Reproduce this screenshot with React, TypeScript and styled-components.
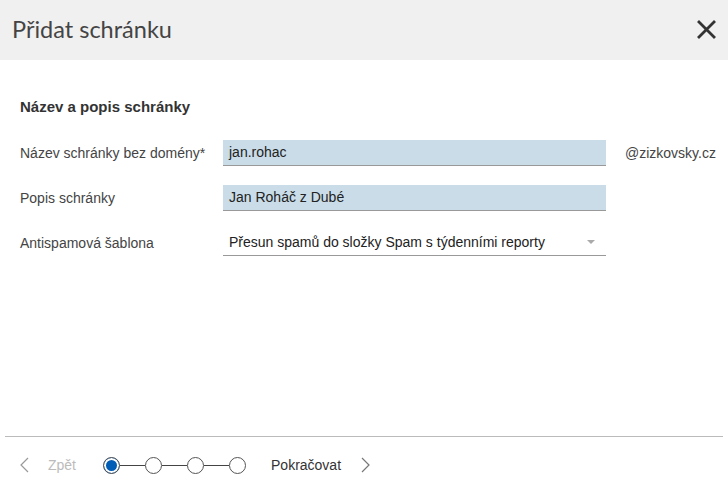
import React from "react";
import styled, { createGlobalStyle } from "styled-components";

const Global = createGlobalStyle`
  html, body { margin: 0; padding: 0; background: #fff; }
  body { font-family: "Liberation Sans", Arial, sans-serif; color: #333; }
  * { box-sizing: border-box; }
`;

const Page = styled.div`
  width: 728px;
  height: 495px;
  display: flex;
  flex-direction: column;
  background: #fff;
`;

const Header = styled.div`
  height: 60px;
  background: #f0f0f0;
  display: flex;
  align-items: center;
  justify-content: space-between;
  padding: 0 12px 2px 12px;
`;

const Title = styled.h1`
  margin: 0;
  font-family: Lato, "Liberation Sans", sans-serif;
  font-weight: 400;
  font-size: 23.5px;
  color: #444;
`;

const CloseButton = styled.button`
  border: 0;
  background: transparent;
  padding: 0;
  width: 20px;
  height: 20px;
  display: flex;
  align-items: center;
  justify-content: center;
  cursor: pointer;
`;

const Content = styled.div`
  flex: 1;
  padding: 38px 20px 0 20px;
`;

const SectionTitle = styled.h2`
  margin: 0 0 24px 0;
  font-size: 15px;
  font-weight: 700;
  color: #333;
  line-height: 18px;
`;

const Form = styled.div`
  display: flex;
  flex-direction: column;
  gap: 19px;
`;

const Row = styled.div`
  display: grid;
  grid-template-columns: 203px 383px auto;
  align-items: center;
  height: 26px;
`;

const Label = styled.label`
  font-size: 14px;
  color: #444;
  padding-bottom: 1px;
  white-space: nowrap;
`;

const Field = styled.div<{ $filled?: boolean }>`
  height: 26px;
  background: ${(p) => (p.$filled ? "#c9dce8" : "transparent")};
  border-bottom: 1px solid #999;
  display: flex;
  align-items: center;
  justify-content: space-between;
  padding: 0 7px 1px 6px;
  font-size: 14px;
  color: #222;
  white-space: nowrap;
`;

const Suffix = styled.span`
  margin-left: 19px;
  font-size: 14px;
  color: #444;
  white-space: nowrap;
`;

const Arrow = styled.span`
  width: 0;
  height: 0;
  border-left: 4px solid transparent;
  border-right: 4px solid transparent;
  border-top: 4px solid #aaa;
  margin-right: 4px;
`;

const Footer = styled.div`
  margin: 0 5px;
  border-top: 1px solid #bbb;
  height: 59px;
  display: flex;
  align-items: center;
  padding: 0 14px 2px 14px;
`;

const NavText = styled.span<{ $disabled?: boolean }>`
  font-size: 14px;
  color: ${(p) => (p.$disabled ? "#bbb" : "#333")};
`;

const NavIcon = styled.svg`
  display: block;
`;

const Steps = styled.div`
  display: flex;
  align-items: center;
  margin: 0 25px 0 27px;
`;

const Step = styled.span<{ $active?: boolean }>`
  width: 17px;
  height: 17px;
  border-radius: 50%;
  border: 1px solid #555;
  background: ${(p) => (p.$active ? "#005db5" : "#fff")};
  box-shadow: ${(p) => (p.$active ? "inset 0 0 0 2px #fff" : "none")};
`;

const Connector = styled.span`
  width: 25px;
  height: 1px;
  background: #444;
`;

export default function App() {
  return (
    <Page>
      <Global />
      <Header>
        <Title>Přidat schránku</Title>
        <CloseButton aria-label="Zavřít">
          <svg width="19" height="19" viewBox="0 0 19 19">
            <path d="M2 2 L17 17 M17 2 L2 17" stroke="#333" strokeWidth="2.8" strokeLinecap="square" />
          </svg>
        </CloseButton>
      </Header>
      <Content>
        <SectionTitle>Název a popis schránky</SectionTitle>
        <Form>
          <Row>
            <Label>Název schránky bez domény*</Label>
            <Field $filled>jan.rohac</Field>
            <Suffix>@zizkovsky.cz</Suffix>
          </Row>
          <Row>
            <Label>Popis schránky</Label>
            <Field $filled>Jan Roháč z Dubé</Field>
            <span />
          </Row>
          <Row>
            <Label>Antispamová šablona</Label>
            <Field>
              <span>Přesun spamů do složky Spam s týdenními reporty</span>
              <Arrow />
            </Field>
            <span />
          </Row>
        </Form>
      </Content>
      <Footer>
        <NavIcon width="12" height="16" viewBox="0 0 12 16">
          <path d="M9 1 L2 8 L9 15" fill="none" stroke="#999" strokeWidth="1.2" />
        </NavIcon>
        <NavText $disabled style={{ marginLeft: 17 }}>Zpět</NavText>
        <Steps>
          <Step $active />
          <Connector />
          <Step />
          <Connector />
          <Step />
          <Connector />
          <Step />
        </Steps>
        <NavText>Pokračovat</NavText>
        <NavIcon width="12" height="16" viewBox="0 0 12 16" style={{ marginLeft: 18 }}>
          <path d="M3 1 L10 8 L3 15" fill="none" stroke="#777" strokeWidth="1.2" />
        </NavIcon>
      </Footer>
    </Page>
  );
}
